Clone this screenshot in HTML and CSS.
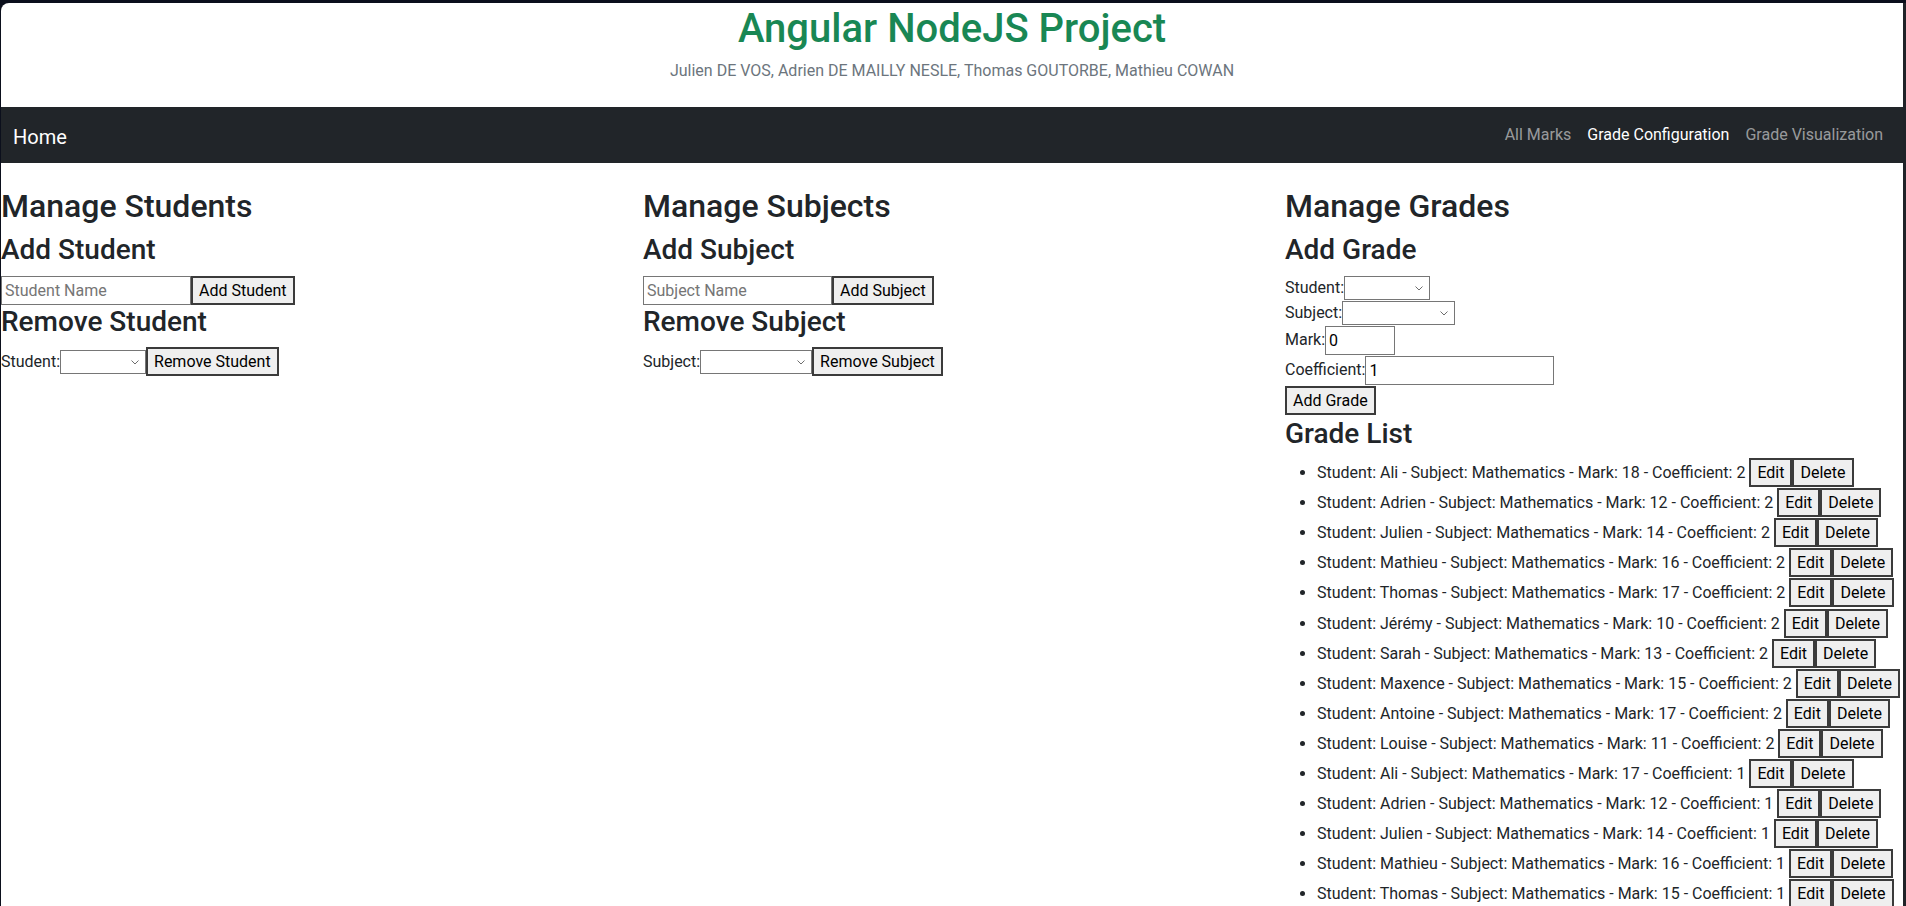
FILE: index.html
```html
<!DOCTYPE html>
<html lang="en">
<head>
<meta charset="utf-8">
<title>Angular NodeJS Project</title>
<link rel="stylesheet" href="styles.css">
</head>
<body>
<div class="window">
  <header class="masthead">
    <h1 class="title">Angular NodeJS Project</h1>
    <p class="authors">Julien DE VOS, Adrien DE MAILLY NESLE, Thomas GOUTORBE, Mathieu COWAN</p>
  </header>

  <nav class="navbar">
    <a class="brand" href="#">Home</a>
    <div class="nav-links">
      <a class="nav-link" href="#">All Marks</a>
      <a class="nav-link active" href="#">Grade Configuration</a>
      <a class="nav-link" href="#">Grade Visualization</a>
    </div>
  </nav>

  <main class="columns">
    <section class="col">
      <h2 class="section-title">Manage Students</h2>
      <h3 class="sub-title">Add Student</h3>
      <div class="form-row"><input class="text w190" type="text" placeholder="Student Name"><button class="btn">Add Student</button></div>
      <h3 class="sub-title">Remove Student</h3>
      <div class="form-row"><label class="field-label">Student:</label><span class="select-wrap"><select class="select w86"></select><svg class="chev" viewBox="0 0 8 5"><path d="M0.5 0.5L4 4L7.5 0.5" fill="none" stroke="#6d6d6d" stroke-width="1"/></svg></span><button class="btn">Remove Student</button></div>
    </section>

    <section class="col">
      <h2 class="section-title">Manage Subjects</h2>
      <h3 class="sub-title">Add Subject</h3>
      <div class="form-row"><input class="text w189" type="text" placeholder="Subject Name"><button class="btn">Add Subject</button></div>
      <h3 class="sub-title">Remove Subject</h3>
      <div class="form-row"><label class="field-label">Subject:</label><span class="select-wrap"><select class="select w112"></select><svg class="chev" viewBox="0 0 8 5"><path d="M0.5 0.5L4 4L7.5 0.5" fill="none" stroke="#6d6d6d" stroke-width="1"/></svg></span><button class="btn">Remove Subject</button></div>
    </section>

    <section class="col">
      <h2 class="section-title">Manage Grades</h2>
      <h3 class="sub-title">Add Grade</h3>
      <div class="form-row short"><label class="field-label">Student:</label><span class="select-wrap"><select class="select w86"></select><svg class="chev" viewBox="0 0 8 5"><path d="M0.5 0.5L4 4L7.5 0.5" fill="none" stroke="#6d6d6d" stroke-width="1"/></svg></span></div>
      <div class="form-row short"><label class="field-label">Subject:</label><span class="select-wrap"><select class="select w113"></select><svg class="chev" viewBox="0 0 8 5"><path d="M0.5 0.5L4 4L7.5 0.5" fill="none" stroke="#6d6d6d" stroke-width="1"/></svg></span></div>
      <div class="form-row"><label class="field-label">Mark:</label><input class="text w70" type="number" value="0"></div>
      <div class="form-row"><label class="field-label">Coefficient:</label><input class="text w189" type="number" value="1"></div>
      <div class="form-row submit-row"><button class="btn">Add Grade</button></div>
      <h3 class="sub-title">Grade List</h3>
      <ul class="grade-list">
        <li>Student: Ali - Subject: Mathematics - Mark: 18 - Coefficient: 2 <button class="btn">Edit</button><button class="btn">Delete</button></li>
        <li>Student: Adrien - Subject: Mathematics - Mark: 12 - Coefficient: 2 <button class="btn">Edit</button><button class="btn">Delete</button></li>
        <li>Student: Julien - Subject: Mathematics - Mark: 14 - Coefficient: 2 <button class="btn">Edit</button><button class="btn">Delete</button></li>
        <li>Student: Mathieu - Subject: Mathematics - Mark: 16 - Coefficient: 2 <button class="btn">Edit</button><button class="btn">Delete</button></li>
        <li>Student: Thomas - Subject: Mathematics - Mark: 17 - Coefficient: 2 <button class="btn">Edit</button><button class="btn">Delete</button></li>
        <li>Student: Jérémy - Subject: Mathematics - Mark: 10 - Coefficient: 2 <button class="btn">Edit</button><button class="btn">Delete</button></li>
        <li>Student: Sarah - Subject: Mathematics - Mark: 13 - Coefficient: 2 <button class="btn">Edit</button><button class="btn">Delete</button></li>
        <li>Student: Maxence - Subject: Mathematics - Mark: 15 - Coefficient: 2 <button class="btn">Edit</button><button class="btn">Delete</button></li>
        <li>Student: Antoine - Subject: Mathematics - Mark: 17 - Coefficient: 2 <button class="btn">Edit</button><button class="btn">Delete</button></li>
        <li>Student: Louise - Subject: Mathematics - Mark: 11 - Coefficient: 2 <button class="btn">Edit</button><button class="btn">Delete</button></li>
        <li>Student: Ali - Subject: Mathematics - Mark: 17 - Coefficient: 1 <button class="btn">Edit</button><button class="btn">Delete</button></li>
        <li>Student: Adrien - Subject: Mathematics - Mark: 12 - Coefficient: 1 <button class="btn">Edit</button><button class="btn">Delete</button></li>
        <li>Student: Julien - Subject: Mathematics - Mark: 14 - Coefficient: 1 <button class="btn">Edit</button><button class="btn">Delete</button></li>
        <li>Student: Mathieu - Subject: Mathematics - Mark: 16 - Coefficient: 1 <button class="btn">Edit</button><button class="btn">Delete</button></li>
        <li>Student: Thomas - Subject: Mathematics - Mark: 15 - Coefficient: 1 <button class="btn">Edit</button><button class="btn">Delete</button></li>
      </ul>
    </section>
  </main>
</div>
</body>
</html>
```
FILE: styles.css
```css
html {
  background: #0b0f1c;
  overflow: hidden;
}

body {
  margin: 0;
  font-family: Roboto, "Liberation Sans", Arial, sans-serif;
  font-size: 16px;
  line-height: 1.5;
  color: #212529;
}

.window {
  margin: 3px 0 0 1px;
  min-height: 903px;
  background: #fff;
  border-right: 3px solid #202328;
  border-top-left-radius: 8px;
}

/* header */
.masthead {
  text-align: center;
  padding: 2px 0 24px;
}

.title {
  margin: 0 0 6px;
  font-size: 40px;
  font-weight: 500;
  line-height: 48px;
  color: #198754;
}

.authors {
  margin: 0;
  line-height: 24px;
  color: #6c757d;
}

/* navbar */
.navbar {
  display: flex;
  align-items: center;
  justify-content: space-between;
  box-sizing: border-box;
  height: 56px;
  padding: 8px 12px;
  background: #212529;
}

.brand {
  font-size: 20px;
  line-height: 30px;
  padding: 6.5px 0 3.5px;
  color: #fff;
  text-decoration: none;
}

.nav-links {
  display: flex;
}

.nav-link {
  padding: 8px;
  line-height: 24px;
  color: rgba(255, 255, 255, 0.55);
  text-decoration: none;
}

.nav-link.active {
  color: #fff;
}

/* columns */
.columns {
  display: grid;
  grid-template-columns: repeat(3, 1fr);
  gap: 24px;
  padding-top: 24px;
}

.col {
  min-width: 0;
}

.section-title {
  margin: 0 0 8px;
  font-size: 32px;
  font-weight: 500;
  line-height: 38.4px;
}

.sub-title {
  margin: 0 0 8px;
  font-size: 28px;
  font-weight: 500;
  line-height: 33.6px;
}

.form-row {
  display: flex;
  align-items: center;
  height: 30px;
}

.form-row.short {
  height: 25px;
}

.form-row.submit-row {
  height: 31.5px;
}

.field-label {
  line-height: 24px;
}

.text {
  box-sizing: border-box;
  height: 29px;
  margin: 0;
  padding: 0 3px;
  border: 1px solid #767676;
  border-radius: 0;
  background: #fff;
  color: #000;
  font: inherit;
  line-height: normal;
  -moz-appearance: textfield;
}

.text::-webkit-outer-spin-button,
.text::-webkit-inner-spin-button {
  -webkit-appearance: none;
  margin: 0;
}

.text::placeholder {
  color: #757575;
}

.w190 { width: 190px; }
.w189 { width: 189px; }
.w70 { width: 70px; }
.w86 { width: 86px; }
.w112 { width: 112px; }
.w113 { width: 113px; }

.btn {
  box-sizing: border-box;
  height: 29px;
  margin: 0;
  padding: 0 6px;
  border: 2px solid #3b3b3b;
  border-radius: 0;
  background: #efefef;
  color: #000;
  font: inherit;
  line-height: normal;
}

.select-wrap {
  position: relative;
  display: inline-flex;
}

.select {
  appearance: none;
  -webkit-appearance: none;
  box-sizing: border-box;
  height: 24px;
  margin: 0;
  padding: 0;
  border: 1px solid #767676;
  border-radius: 0;
  background: #fff;
  font: inherit;
}

.chev {
  position: absolute;
  right: 7px;
  top: 10px;
  width: 8px;
  height: 5px;
  pointer-events: none;
}

/* grade list */
.grade-list {
  margin: 0 0 16px;
  padding-left: 32px;
}

.grade-list li {
  height: 30.1px;
  line-height: 29px;
  white-space: nowrap;
}

.grade-list .btn {
  vertical-align: top;
}
```
